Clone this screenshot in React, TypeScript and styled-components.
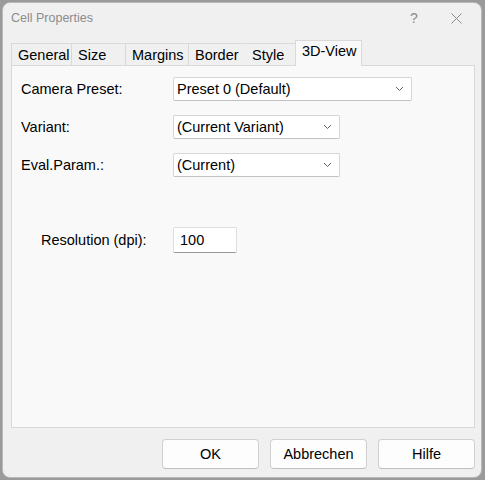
import React from "react";
import styled, { createGlobalStyle } from "styled-components";

const GlobalStyle = createGlobalStyle`
  html, body {
    margin: 0;
    padding: 0;
    background: #9a9a9a;
  }
  body {
    font-family: "Segoe UI", "Liberation Sans", Arial, sans-serif;
  }
`;

const Window = styled.div`
  box-sizing: border-box;
  margin: 2px 0 0 2px;
  width: 480px;
  height: 476px;
  background: #f0f0f0;
  border: 1px solid #b9b9b9;
  border-radius: 8px;
  display: flex;
  flex-direction: column;
  padding: 0 7px 0 8px;
  overflow: hidden;
`;

const TitleBar = styled.div`
  height: 37px;
  display: flex;
  align-items: flex-start;
  padding-top: 6px;
  box-sizing: border-box;
  color: #8c8c8c;
  font-size: 12.5px;
`;

const Title = styled.div`
  flex: 1;
  line-height: 18px;
`;

const TitleButton = styled.div<{ $right: number }>`
  width: 16px;
  height: 18px;
  display: flex;
  align-items: center;
  justify-content: center;
  margin-right: ${(p) => p.$right}px;
  font-size: 14px;
  color: #8c8c8c;
`;

const TabStrip = styled.div`
  display: flex;
  align-items: flex-end;
  height: 25px;
  position: relative;
  z-index: 1;
`;

const Tab = styled.div<{ $active?: boolean; $width: number; $noLeft?: boolean }>`
  box-sizing: border-box;
  width: ${(p) => p.$width}px;
  height: ${(p) => (p.$active ? 26 : 22)}px;
  margin-bottom: ${(p) => (p.$active ? -1 : 0)}px;
  padding: ${(p) => (p.$active ? "0 0 5px 6px" : "0 0 0 6px")};
  display: flex;
  align-items: center;
  font-size: 14.5px;
  color: #000;
  background: ${(p) => (p.$active ? "#f9f9f9" : "#f0f0f0")};
  border-top: 1px solid #d9d9d9;
  border-left: 1px solid ${(p) => (p.$noLeft ? "transparent" : "#d9d9d9")};
  border-right: ${(p) => (p.$active ? "1px solid #d9d9d9" : "none")};
  white-space: nowrap;
`;

const Panel = styled.div`
  flex: 1;
  box-sizing: border-box;
  width: 464px;
  background: #f9f9f9;
  border: 1px solid #d9d9d9;
  padding: 11px 9px;
`;

const FieldGrid = styled.div`
  display: grid;
  grid-template-columns: 152px auto;
  row-gap: 14px;
  align-items: center;
`;

const Label = styled.div<{ $indent?: number }>`
  font-size: 14.5px;
  color: #000;
  padding-left: ${(p) => p.$indent || 0}px;
`;

const Select = styled.div<{ $width: number }>`
  box-sizing: border-box;
  width: ${(p) => p.$width}px;
  height: 24px;
  background: #fff;
  border: 1px solid #d6d6d6;
  border-bottom-color: #c2c2c2;
  border-radius: 2px;
  display: flex;
  align-items: center;
  padding: 0 7px 0 3px;
  font-size: 14.5px;
  color: #000;
`;

const SelectText = styled.span`
  flex: 1;
  white-space: nowrap;
`;

const Input = styled.div`
  box-sizing: border-box;
  width: 64px;
  height: 26px;
  background: #fff;
  border: 1px solid #dedede;
  border-bottom-color: #9a9a9a;
  border-radius: 2px;
  display: flex;
  align-items: center;
  padding: 0 6px;
  font-size: 14.5px;
  color: #000;
`;

const ResolutionGrid = styled(FieldGrid)`
  margin-top: 50px;
`;

const ButtonBar = styled.div`
  display: flex;
  justify-content: flex-end;
  gap: 11px;
  padding: 11px 0 8px;
  width: 464px;
`;

const Button = styled.div`
  box-sizing: border-box;
  width: 97px;
  height: 30px;
  background: #fdfdfd;
  border: 1px solid #d0d0d0;
  border-bottom-color: #c0c0c0;
  border-radius: 4px;
  display: flex;
  align-items: center;
  justify-content: center;
  font-size: 14.5px;
  color: #000;
`;

const Chevron = () => (
  <svg width="9" height="6" viewBox="0 0 9 6">
    <path d="M1 1 L4.5 4.5 L8 1" fill="none" stroke="#606060" strokeWidth="1" />
  </svg>
);

const CloseIcon = () => (
  <svg width="11" height="11" viewBox="0 0 11 11">
    <path d="M0.5 0.5 L10.5 10.5 M10.5 0.5 L0.5 10.5" stroke="#8c8c8c" strokeWidth="1" />
  </svg>
);

const tabs = [
  { label: "General", width: 60 },
  { label: "Size", width: 54 },
  { label: "Margins", width: 63 },
  { label: "Border", width: 57 },
  { label: "Style", width: 50, noLeft: true },
  { label: "3D-View", width: 67, active: true },
];

function App() {
  return (
    <>
      <GlobalStyle />
      <Window>
        <TitleBar>
          <Title>Cell Properties</Title>
          <TitleButton $right={26}>?</TitleButton>
          <TitleButton $right={10}>
            <CloseIcon />
          </TitleButton>
        </TitleBar>
        <TabStrip>
          {tabs.map((t) => (
            <Tab key={t.label} $width={t.width} $active={t.active} $noLeft={t.noLeft}>
              {t.label}
            </Tab>
          ))}
        </TabStrip>
        <Panel>
          <FieldGrid>
            <Label>Camera Preset:</Label>
            <Select $width={239}>
              <SelectText>Preset 0 (Default)</SelectText>
              <Chevron />
            </Select>
            <Label>Variant:</Label>
            <Select $width={167}>
              <SelectText>(Current Variant)</SelectText>
              <Chevron />
            </Select>
            <Label>Eval.Param.:</Label>
            <Select $width={167}>
              <SelectText>(Current)</SelectText>
              <Chevron />
            </Select>
          </FieldGrid>
          <ResolutionGrid>
            <Label $indent={20}>Resolution (dpi):</Label>
            <Input>100</Input>
          </ResolutionGrid>
        </Panel>
        <ButtonBar>
          <Button>OK</Button>
          <Button>Abbrechen</Button>
          <Button>Hilfe</Button>
        </ButtonBar>
      </Window>
    </>
  );
}

export default App;
